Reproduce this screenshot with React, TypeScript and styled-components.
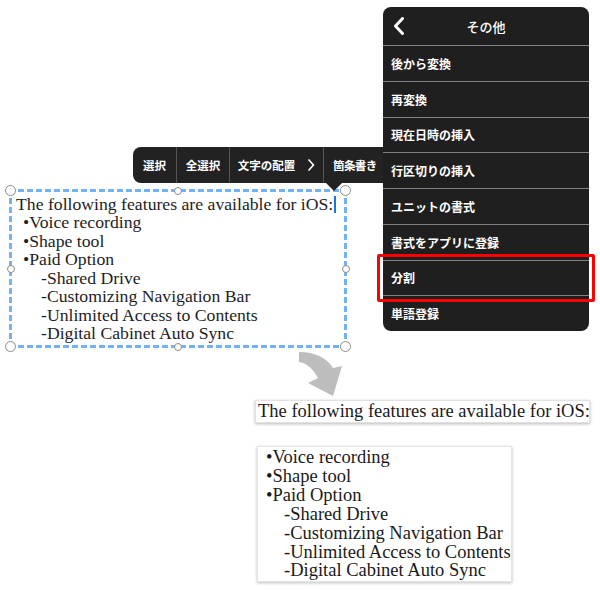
import React from "react";
import styled, { createGlobalStyle } from "styled-components";

const Global = createGlobalStyle`
  html, body { margin: 0; padding: 0; background: #ffffff; }
  body { width: 600px; height: 591px; overflow: hidden; }
`;

const Canvas = styled.div`
  position: relative;
  width: 600px;
  height: 591px;
  overflow: hidden;
  background: #ffffff;
  font-family: "Liberation Serif", "DejaVu Serif", serif;
`;

const Stage = styled.div`
  display: flex;
  flex-direction: column;
  align-items: flex-start;
  padding: 189px 0 0 9px;
`;

const dash = "#72b2f6";

const TextBox = styled.div`
  position: relative;
  box-sizing: border-box;
  width: 338px;
  height: 159px;
  padding: 6px 0 0 7px;
  color: #1e1e1e;
  font-size: 17.7px;
  line-height: 18.45px;
  background:
    linear-gradient(to right, ${dash} 62%, transparent 0) top left / 9px 3px repeat-x,
    linear-gradient(to right, ${dash} 62%, transparent 0) bottom left / 9px 3px repeat-x,
    linear-gradient(to bottom, ${dash} 62%, transparent 0) top left / 3px 9px repeat-y,
    linear-gradient(to bottom, ${dash} 62%, transparent 0) top right / 3px 9px repeat-y;
`;

const Line = styled.div<{ $indent: number }>`
  padding-left: ${(p) => p.$indent}px;
  white-space: nowrap;
`;

const Caret = styled.span`
  display: inline-block;
  width: 2px;
  height: 17px;
  margin-left: 1px;
  background: #1a73e8;
  vertical-align: -3px;
`;

const HandleLayer = styled.div`
  position: absolute;
  inset: -4px;
  display: flex;
  flex-direction: column;
  justify-content: space-between;
  pointer-events: none;
`;

const HandleRow = styled.div`
  display: flex;
  justify-content: space-between;
`;

const HandleSlot = styled.div`
  width: 11px;
  height: 11px;
  display: flex;
  align-items: center;
  justify-content: center;
`;

const Handle = styled.span<{ $small?: boolean }>`
  box-sizing: border-box;
  width: ${(p) => (p.$small ? 8 : 11)}px;
  height: ${(p) => (p.$small ? 8 : 11)}px;
  border-radius: 50%;
  border: 1px solid #8c8c8c;
  background: #ffffff;
`;

const ResultHeading = styled.div`
  box-sizing: border-box;
  margin: 52px 0 0 246px;
  width: 335px;
  height: 23px;
  padding-left: 2px;
  border: 1px solid #e2e2e2;
  box-shadow: 0 1px 3px rgba(0, 0, 0, 0.28);
  background: #ffffff;
  color: #1a1a1a;
  font-size: 18.5px;
  line-height: 21px;
  white-space: nowrap;
`;

const ResultList = styled.div`
  box-sizing: border-box;
  margin: 23px 0 0 248px;
  width: 255px;
  height: 136px;
  padding-top: 1px;
  border: 1px solid #e4e4e4;
  box-shadow: 0 1px 3px rgba(0, 0, 0, 0.25);
  background: #ffffff;
  color: #1a1a1a;
  font-size: 18.5px;
  line-height: 18.9px;
`;

const Toolbar = styled.div`
  position: absolute;
  left: 133px;
  top: 147px;
  width: 262px;
  height: 36px;
  display: flex;
  align-items: stretch;
  background: #222222;
  border-radius: 8px;
  font-family: "Noto Sans CJK JP", "Noto Sans", sans-serif;
  font-weight: 700;
  font-size: 11.5px;
  color: #ffffff;
`;

const ToolItem = styled.div<{ $w?: number }>`
  box-sizing: border-box;
  display: flex;
  align-items: center;
  justify-content: ${(p) => (p.$w ? "center" : "flex-start")};
  ${(p) => (p.$w ? `width: ${p.$w}px; flex: none;` : "flex: 1; padding-left: 9px; letter-spacing: -0.6px;")}
  border-right: 1px solid #555555;
  &:last-of-type { border-right: none; }
  gap: 12px;
`;

const Pointer = styled.div`
  position: absolute;
  left: 192px;
  top: 35px;
  width: 0;
  height: 0;
  border-left: 9px solid transparent;
  border-right: 9px solid transparent;
  border-top: 9px solid #222222;
`;

const Menu = styled.div`
  position: absolute;
  left: 383px;
  top: 7px;
  width: 206px;
  height: 324px;
  display: flex;
  flex-direction: column;
  background: #1f1f1f;
  border-radius: 8px;
  overflow: hidden;
  font-family: "Noto Sans CJK JP", "Noto Sans", sans-serif;
  color: #ffffff;
`;

const MenuHeader = styled.div`
  position: relative;
  height: 38px;
  flex: none;
  display: flex;
  align-items: center;
  justify-content: center;
  border-bottom: 1px solid #808080;
  font-size: 13px;
  font-weight: 500;
`;

const BackIcon = styled.svg`
  position: absolute;
  left: 9px;
  top: 10px;
`;

const MenuRow = styled.div`
  flex: 1;
  display: flex;
  align-items: center;
  padding-left: 8px;
  border-bottom: 1px solid #808080;
  font-size: 12px;
  font-weight: 700;
  &:last-child { border-bottom: none; }
`;

const Highlight = styled.div`
  position: absolute;
  left: 377px;
  top: 254px;
  width: 218px;
  height: 48px;
  box-sizing: border-box;
  border: 3px solid #ff0000;
  border-radius: 2px;
`;

const Arrow = styled.svg`
  position: absolute;
  left: 295px;
  top: 348px;
`;

const lines: { t: string; i: number }[] = [
  { t: "•Voice recording", i: 7 },
  { t: "•Shape tool", i: 7 },
  { t: "•Paid Option", i: 7 },
  { t: "-Shared Drive", i: 25 },
  { t: "-Customizing Navigation Bar", i: 25 },
  { t: "-Unlimited Access to Contents", i: 25 },
  { t: "-Digital Cabinet Auto Sync", i: 25 },
];

const menuItems = [
  "後から変換",
  "再変換",
  "現在日時の挿入",
  "行区切りの挿入",
  "ユニットの書式",
  "書式をアプリに登録",
  "分割",
  "単語登録",
];

const handleRows: (boolean | null)[][] = [
  [false, true, false],
  [true, null, true],
  [false, true, false],
];

export default function App() {
  return (
    <Canvas>
      <Global />
      <Stage>
        <TextBox>
          <Line $indent={0}>
            The following features are available for iOS:<Caret />
          </Line>
          {lines.map((l) => (
            <Line key={l.t} $indent={l.i}>
              {l.t}
            </Line>
          ))}
          <HandleLayer>
            {handleRows.map((row, r) => (
              <HandleRow key={r}>
                {row.map((small, c) => (
                  <HandleSlot key={c}>{small !== null && <Handle $small={small} />}</HandleSlot>
                ))}
              </HandleRow>
            ))}
          </HandleLayer>
        </TextBox>
        <ResultHeading>The following features are available for iOS:</ResultHeading>
        <ResultList>
          {lines.map((l) => (
            <Line key={l.t} $indent={l.i + 1}>
              {l.t}
            </Line>
          ))}
        </ResultList>
      </Stage>

      <Toolbar>
        <ToolItem $w={44}>選択</ToolItem>
        <ToolItem $w={53}>全選択</ToolItem>
        <ToolItem $w={94}>
          <span>文字の配置</span>
          <svg width="8" height="14" viewBox="0 0 8 14">
            <polyline points="1.5,1.5 6.5,7 1.5,12.5" fill="none" stroke="#ffffff" strokeWidth="1.6" />
          </svg>
        </ToolItem>
        <ToolItem>箇条書き</ToolItem>
        <Pointer />
      </Toolbar>

      <Menu>
        <MenuHeader>
          <BackIcon width="14" height="18" viewBox="0 0 14 18">
            <polyline points="10.5,1.5 3.5,9 10.5,16.5" fill="none" stroke="#ffffff" strokeWidth="3" strokeLinecap="round" strokeLinejoin="round" />
          </BackIcon>
          その他
        </MenuHeader>
        {menuItems.map((m) => (
          <MenuRow key={m}>{m}</MenuRow>
        ))}
      </Menu>

      <Highlight />

      <Arrow width="52" height="52" viewBox="0 0 52 52">
        <path d="M4,4 C20,4 32,10 38,20 L47,18 L38,48 L13,35 L23,30 C18,21 12,15 4,14 Z" fill="#bdbdbd" />
      </Arrow>
    </Canvas>
  );
}
